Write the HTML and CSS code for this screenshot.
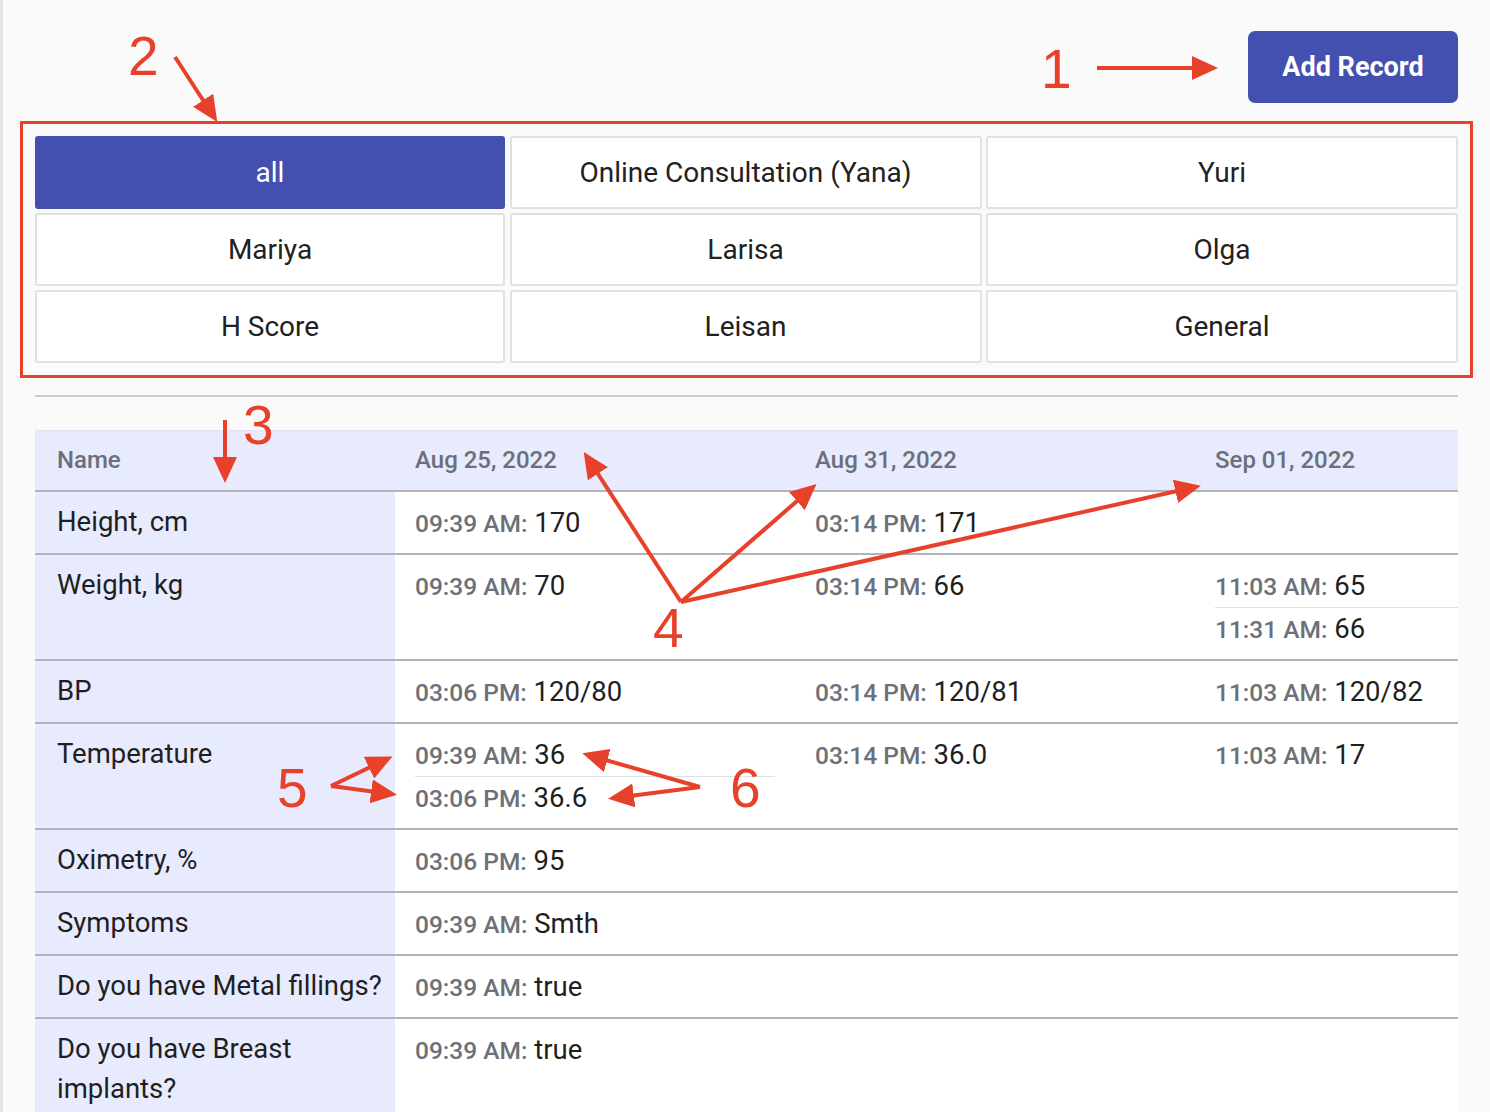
FILE: index.html
```html
<!DOCTYPE html>
<html lang="en">
<head>
<meta charset="utf-8">
<title>Records</title>
<link rel="stylesheet" href="styles.css">
</head>
<body>
<div class="page">
  <div class="toolbar">
    <button class="btn-primary">Add Record</button>
  </div>

  <div class="tabs">
    <div class="tab active">all</div>
    <div class="tab">Online Consultation (Yana)</div>
    <div class="tab">Yuri</div>
    <div class="tab">Mariya</div>
    <div class="tab">Larisa</div>
    <div class="tab">Olga</div>
    <div class="tab">H Score</div>
    <div class="tab">Leisan</div>
    <div class="tab">General</div>
  </div>

  <div class="divider"></div>

  <table class="records">
    <colgroup>
      <col class="c-name">
      <col class="c-date">
      <col class="c-date">
      <col>
    </colgroup>
    <thead>
      <tr>
        <th class="name">Name</th>
        <th>Aug 25, 2022</th>
        <th>Aug 31, 2022</th>
        <th class="last">Sep 01, 2022</th>
      </tr>
    </thead>
    <tbody>
      <tr>
        <td class="name">Height, cm</td>
        <td><div class="entry"><span class="time">09:39 AM:</span> 170</div></td>
        <td><div class="entry"><span class="time">03:14 PM:</span> 171</div></td>
        <td class="last"></td>
      </tr>
      <tr>
        <td class="name">Weight, kg</td>
        <td><div class="entry"><span class="time">09:39 AM:</span> 70</div></td>
        <td><div class="entry"><span class="time">03:14 PM:</span> 66</div></td>
        <td class="last"><div class="entry"><span class="time">11:03 AM:</span> 65</div><div class="entry"><span class="time">11:31 AM:</span> 66</div></td>
      </tr>
      <tr>
        <td class="name">BP</td>
        <td><div class="entry"><span class="time">03:06 PM:</span> 120/80</div></td>
        <td><div class="entry"><span class="time">03:14 PM:</span> 120/81</div></td>
        <td class="last"><div class="entry"><span class="time">11:03 AM:</span> 120/82</div></td>
      </tr>
      <tr>
        <td class="name">Temperature</td>
        <td><div class="entry"><span class="time">09:39 AM:</span> 36</div><div class="entry"><span class="time">03:06 PM:</span> 36.6</div></td>
        <td><div class="entry"><span class="time">03:14 PM:</span> 36.0</div></td>
        <td class="last"><div class="entry"><span class="time">11:03 AM:</span> 17</div></td>
      </tr>
      <tr>
        <td class="name">Oximetry, %</td>
        <td><div class="entry"><span class="time">03:06 PM:</span> 95</div></td>
        <td></td>
        <td class="last"></td>
      </tr>
      <tr>
        <td class="name">Symptoms</td>
        <td><div class="entry"><span class="time">09:39 AM:</span> Smth</div></td>
        <td></td>
        <td class="last"></td>
      </tr>
      <tr>
        <td class="name">Do you have Metal fillings?</td>
        <td><div class="entry"><span class="time">09:39 AM:</span> true</div></td>
        <td></td>
        <td class="last"></td>
      </tr>
      <tr>
        <td class="name">Do you have Breast implants?</td>
        <td><div class="entry"><span class="time">09:39 AM:</span> true</div></td>
        <td></td>
        <td class="last"></td>
      </tr>
    </tbody>
  </table>
</div>

<svg class="annotations" width="1490" height="1112" viewBox="0 0 1490 1112" xmlns="http://www.w3.org/2000/svg">
  <defs>
    <marker id="head" markerUnits="userSpaceOnUse" markerWidth="28" markerHeight="26" refX="20" refY="12" orient="auto">
      <path d="M0,0 L26,12 L0,24 Z" fill="#e8412b"/>
    </marker>
  </defs>
  <g stroke="#e8412b" stroke-width="4" fill="none" marker-end="url(#head)">
    <line x1="1097" y1="68" x2="1212" y2="68"/>
    <line x1="175" y1="57" x2="214" y2="117"/>
    <line x1="225" y1="420" x2="225" y2="477"/>
    <line x1="681" y1="602" x2="587" y2="457"/>
    <line x1="681" y1="602" x2="812" y2="488"/>
    <line x1="681" y1="602" x2="1195" y2="487"/>
    <line x1="331" y1="786" x2="387" y2="759"/>
    <line x1="331" y1="786" x2="391" y2="794"/>
    <line x1="700" y1="787" x2="588" y2="755"/>
    <line x1="700" y1="787" x2="614" y2="798"/>
  </g>
  <g class="num" fill="#e8412b">
    <text x="1041" y="88">1</text>
    <text x="128" y="75">2</text>
    <text x="243" y="444">3</text>
    <text x="653" y="647">4</text>
    <text x="277" y="807">5</text>
    <text x="730" y="807">6</text>
  </g>
</svg>
</body>
</html>
```

FILE: styles.css
```css
* { box-sizing: border-box; }

html, body {
  margin: 0;
  padding: 0;
}

body {
  position: relative;
  background: #fafafa;
  font-family: Roboto, "Noto Sans", "Liberation Sans", sans-serif;
  color: #1f1f1f;
  overflow: hidden;
  width: 1490px;
  height: 1112px;
}

.page {
  border-left: 3px solid #e4e4e4;
  min-height: 1112px;
  padding: 31px 32px 0 32px;
}

.toolbar {
  display: flex;
  justify-content: flex-end;
}

.btn-primary {
  width: 210px;
  height: 72px;
  border: none;
  border-radius: 7px;
  background: #4450b0;
  color: #ffffff;
  font-family: Roboto, "Liberation Sans", sans-serif;
  font-size: 27px;
  font-weight: 700;
}

.tabs {
  margin-top: 33px;
  display: grid;
  grid-template-columns: 470px 472px 472px;
  justify-content: space-between;
  row-gap: 4px;
  outline: 3px solid #e8412b;
  outline-offset: 12px;
}

.tab {
  height: 73px;
  display: flex;
  align-items: center;
  justify-content: center;
  background: #ffffff;
  border: 2px solid #e1e1e1;
  border-radius: 3px;
  font-size: 28px;
  color: #212121;
}

.tab.active {
  background: #4450b0;
  border-color: #4450b0;
  color: #ffffff;
}

.divider {
  margin-top: 32px;
  height: 2px;
  background: #cdcdcd;
}

.records {
  margin-top: 33px;
  width: 100%;
  border-collapse: collapse;
  table-layout: fixed;
}

.c-name { width: 360px; }
.c-date { width: 400px; }

.records th {
  height: 60px;
  padding: 0 20px;
  background: #e8eafd;
  border-top: 1px solid #dfe2f2;
  border-bottom: 2px solid #b4b4b8;
  text-align: left;
  font-size: 24px;
  font-weight: 500;
  color: #6b6f7a;
}

.records th.name { padding-left: 22px; }

.records td {
  vertical-align: top;
  padding: 10px 20px 9px 20px;
  border-bottom: 2px solid #b4b4b8;
  background: #ffffff;
  font-size: 27.5px;
  line-height: 40px;
  color: #1f1f1f;
}

.records td.name {
  background: #e8eafd;
  padding-left: 22px;
  padding-right: 4px;
}

.records td.last,
.records th.last {
  padding-right: 0;
}

.entry {
  padding: 1px 0;
  height: 42px;
  line-height: 40px;
  white-space: nowrap;
}

.entry + .entry {
  height: 43px;
  border-top: 1px solid #dde1e7;
}

.time {
  font-size: 24.5px;
  line-height: 1;
  font-weight: 500;
  color: #6b7079;
}

.annotations {
  position: absolute;
  top: 0;
  left: 0;
  pointer-events: none;
}

.num text {
  font-family: "Liberation Sans", Arial, sans-serif;
  font-size: 55px;
  font-weight: 400;
}
```
